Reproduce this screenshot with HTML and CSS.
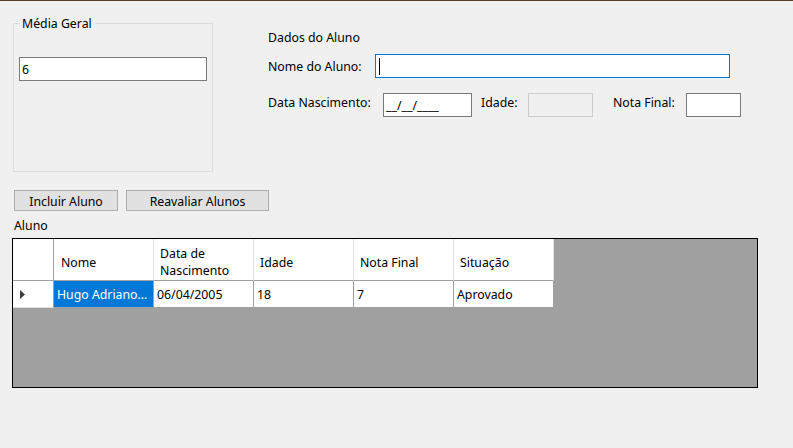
FILE: index.html
```html
<!DOCTYPE html>
<html lang="pt-BR">
<head>
<meta charset="utf-8">
<title>Cadastro de Alunos</title>
<link rel="stylesheet" href="styles.css">
</head>
<body>
<div class="form">
  <div class="top">
    <div class="groupbox">
      <span class="legend">Média Geral</span>
      <div class="textbox media">6</div>
    </div>
    <div class="dados">
      <div class="title">Dados do Aluno</div>
      <div class="row row-nome">
        <span class="label l-nome">Nome do Aluno:</span>
        <div class="textbox focused nome"><span class="caret"></span></div>
      </div>
      <div class="row row-data">
        <span class="label l-data">Data Nascimento:</span>
        <div class="textbox data">__/__/____</div>
        <span class="label l-idade">Idade:</span>
        <div class="textbox disabled idade"></div>
        <span class="label l-nota">Nota Final:</span>
        <div class="textbox nota"></div>
      </div>
    </div>
  </div>
  <div class="buttons">
    <button class="btn b-incluir">Incluir Aluno</button>
    <button class="btn b-reavaliar">Reavaliar Alunos</button>
  </div>
  <div class="grid-label">Aluno</div>
  <div class="grid">
    <div class="grid-row header">
      <div class="hcell rowhead"></div>
      <div class="hcell h-nome">Nome</div>
      <div class="hcell">Data de<br>Nascimento</div>
      <div class="hcell">Idade</div>
      <div class="hcell">Nota Final</div>
      <div class="hcell">Situação</div>
    </div>
    <div class="grid-row datarow">
      <div class="dcell rowhead"><svg class="arrow" width="5" height="9" viewBox="0 0 5 9"><path d="M0 0 L5 4.5 L0 9 Z" fill="#3c3c3c"/></svg></div>
      <div class="dcell selected">Hugo Adriano...</div>
      <div class="dcell">06/04/2005</div>
      <div class="dcell">18</div>
      <div class="dcell">7</div>
      <div class="dcell">Aprovado</div>
    </div>
  </div>
</div>
</body>
</html>
```
FILE: styles.css
```css
html, body {
  margin: 0;
  padding: 0;
}
body {
  background: #f0f0f0;
  border-top: 1px solid #5a4020;
  font-family: "Noto Sans", "Open Sans", sans-serif;
  font-size: 12.3px;
  color: #000;
  width: 793px;
  height: 447px;
  overflow: hidden;
}
.top {
  display: flex;
  align-items: flex-start;
}
.groupbox {
  position: relative;
  box-sizing: border-box;
  margin: 22px 0 0 13px;
  width: 200px;
  height: 149px;
  border: 1px solid #dcdcdc;
  padding: 33px 0 0 5px;
}
.legend {
  position: absolute;
  top: -8px;
  left: 5px;
  padding: 0 3px;
  background: #f0f0f0;
  line-height: 16px;
}
.textbox {
  box-sizing: border-box;
  height: 24px;
  border: 1px solid #7a7a7a;
  background: #fff;
  padding: 2px 2px 0;
  line-height: 20px;
  white-space: nowrap;
}
.media { width: 188px; }
.dados {
  margin: 29px 0 0 55px;
}
.title { line-height: 16px; }
.row {
  display: flex;
}
.label {
  line-height: 16px;
  white-space: nowrap;
}
.row-nome {
  margin-top: 8px;
  align-items: center;
}
.row-nome .label { padding-top: 2px; }
.l-nome { width: 107px; }
.nome {
  width: 355px;
  border-color: #0078d7;
  display: flex;
  align-items: center;
  padding-top: 0;
}
.caret {
  display: block;
  width: 1px;
  height: 17px;
  background: #000;
  margin-left: 1px;
}
.row-data {
  margin-top: 15px;
  align-items: flex-start;
}
.row-data .label { margin-top: 2px; }
.l-data { width: 115px; }
.data { width: 89px; }
.row-data .l-idade { width: 47px; margin-left: 9px; }
.idade { width: 65px; }
.disabled {
  border-color: #cccccc;
  background: #f0f0f0;
}
.row-data .l-nota { width: 73px; margin-left: 20px; }
.nota { width: 55px; }
.buttons {
  display: flex;
  gap: 8px;
  margin: 18px 0 0 14px;
}
.btn {
  box-sizing: border-box;
  height: 21px;
  margin: 0;
  border: 1px solid #adadad;
  background: #e1e1e1;
  padding: 3px 0 0;
  font-family: inherit;
  font-size: inherit;
  line-height: 16px;
  color: #000;
  text-align: center;
  display: block;
}
.b-incluir { width: 104px; }
.b-reavaliar { width: 143px; }
.grid-label {
  margin: 7px 0 0 14px;
  line-height: 16px;
}
.grid {
  box-sizing: border-box;
  margin: 4px 0 0 12px;
  width: 746px;
  height: 150px;
  border: 1px solid #000;
  background: #a0a0a0;
}
.grid-row {
  display: flex;
}
.hcell {
  box-sizing: border-box;
  width: 100px;
  height: 42px;
  background: #fff;
  border-right: 1px solid #e0e0e0;
  border-bottom: 1px solid #a0a0a0;
  padding: 5px 0 0 6px;
  line-height: 17px;
  display: flex;
  align-items: center;
}
.h-nome { padding-left: 7px; }
.hcell.rowhead {
  width: 41px;
  border-right-color: #a0a0a0;
}
.dcell {
  box-sizing: border-box;
  width: 100px;
  height: 26px;
  background: #fff;
  border-right: 1px solid #a0a0a0;
  padding: 2px 0 0 3px;
  line-height: 24px;
  white-space: nowrap;
  overflow: hidden;
}
.dcell.rowhead {
  width: 41px;
  display: flex;
  align-items: center;
  padding: 0 0 0 7px;
  height: 27px;
  border-bottom: 1px solid #e0e0e0;
}
.arrow { display: block; margin-top: 1px; }
.selected {
  background: #0078d7;
  color: #fff;
}
```
